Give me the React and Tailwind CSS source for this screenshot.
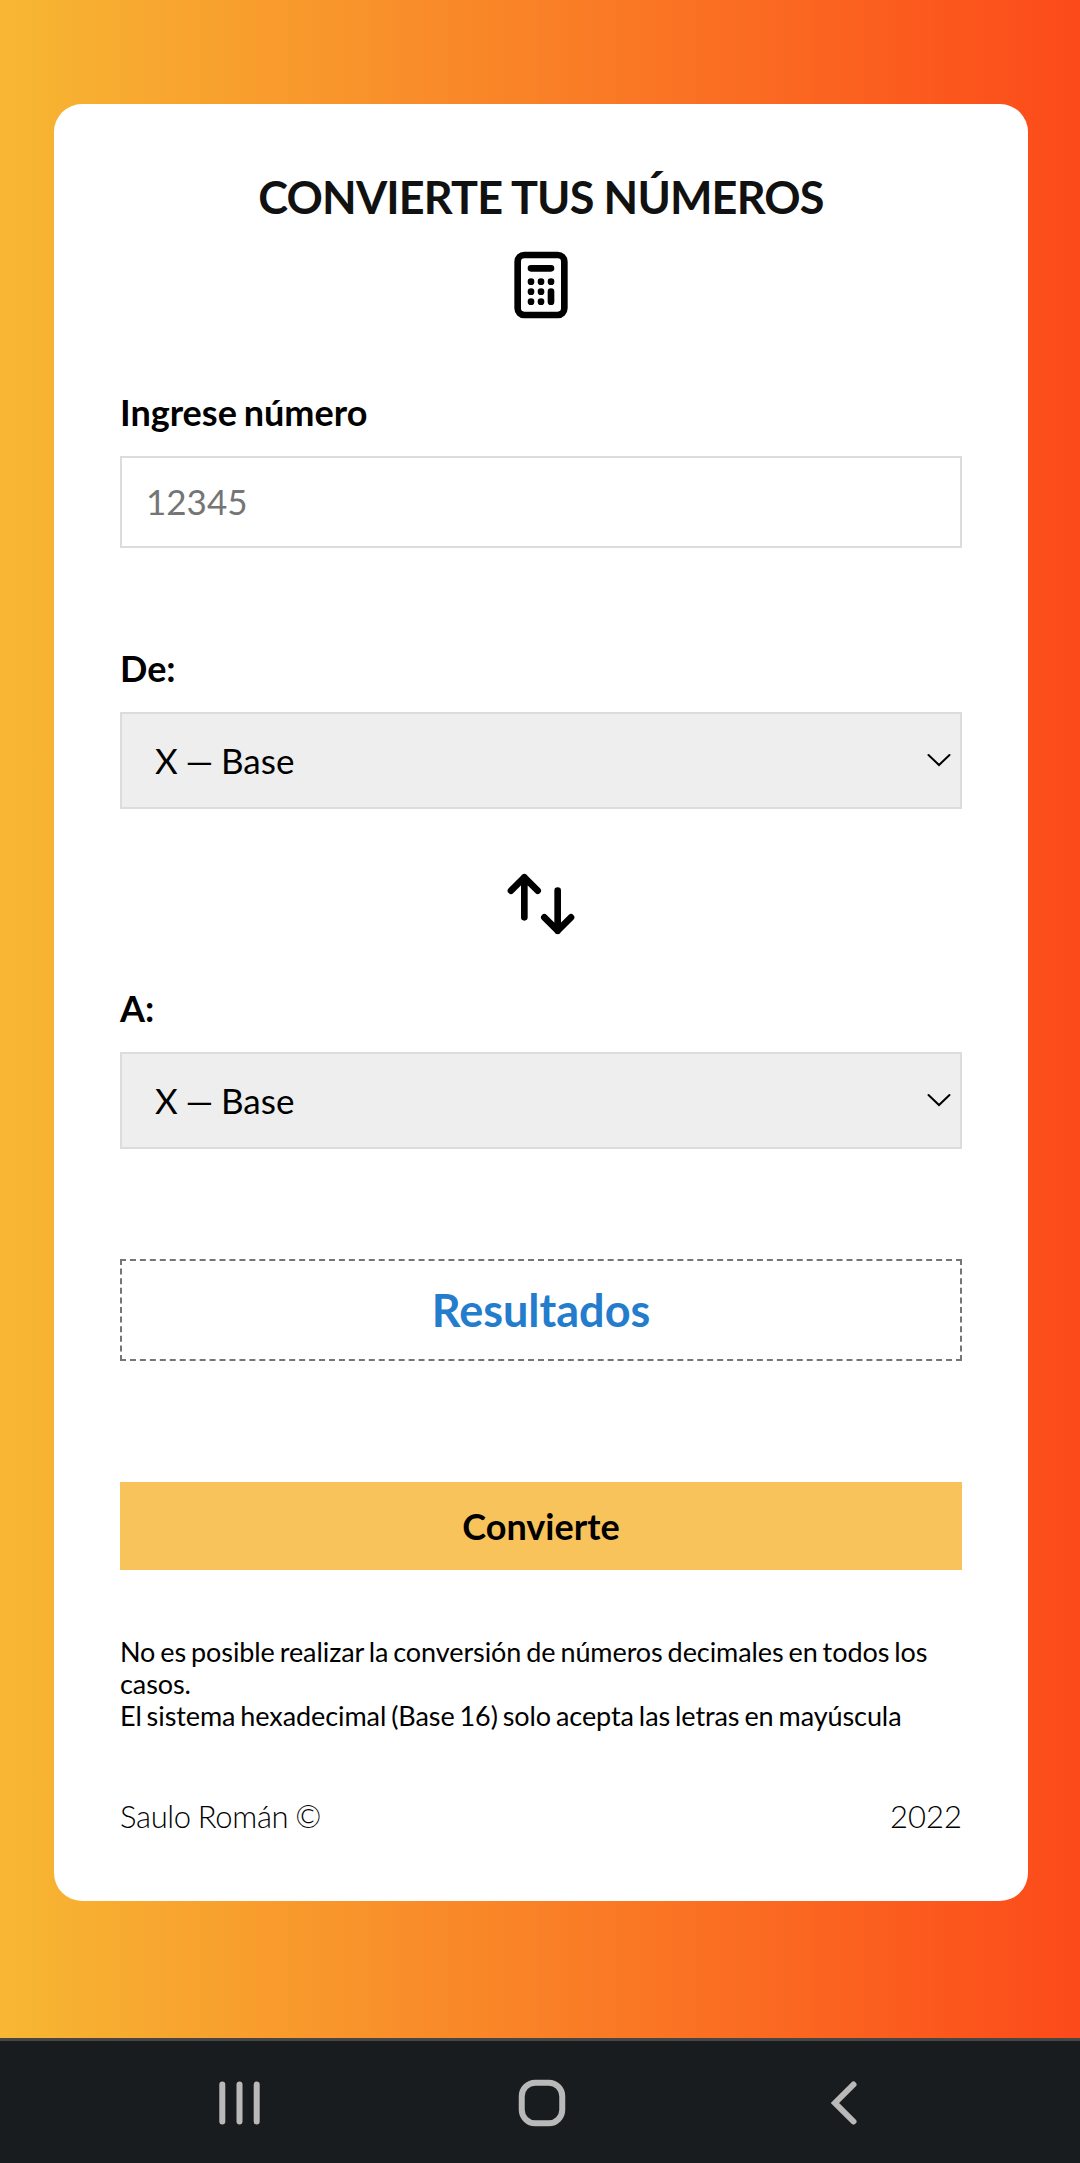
function Select({ label, id }) {
  return (
    <div className="flex flex-col">
      <label htmlFor={id} className="h-[42px] text-[36px] leading-[42px] font-bold">{label}</label>
      <button id={id} className="mt-[23px] flex h-[97px] items-center justify-between border-2 border-[#dcdcdc] bg-[#eeeeee] pr-[9px] pb-px pl-[33px] text-left text-[35px] leading-[42px]">
        <span className="[word-spacing:-1.2px]">X — Base</span>
        <svg className="h-[14px] w-6" viewBox="0 0 24 14" fill="none" stroke="#000" strokeWidth="2" strokeLinecap="round">
          <path d="M1.5 2 12 12 22.5 2" />
        </svg>
      </button>
    </div>
  );
}

function Icon({ d }) {
  return (
    <svg className="h-20 w-20" viewBox="0 0 24 24" fill="none" stroke="#000" strokeWidth="2" strokeLinecap="round" strokeLinejoin="round">
      <path d={d} />
    </svg>
  );
}

export default function App() {
  return (
    <div className="flex h-[2163px] w-[1080px] flex-col overflow-hidden bg-[#191c1e] font-['Lato',sans-serif] text-black">
      <main className="flex h-[2038px] flex-col bg-[linear-gradient(to_right,#f7b733,#fc4a1a)] pt-[104px] pl-[54px]">
        <section className="flex h-[1797px] w-[974px] flex-col rounded-[28px] bg-white px-[66px] pt-[66px]">
          <header className="flex flex-col items-center">
            <h1 className="h-[54px] text-[45px] leading-[54px] font-bold tracking-[-0.85px] whitespace-nowrap text-[#111111]">CONVIERTE TUS NÚMEROS</h1>
            <div className="mt-[21px]">
              <Icon d="M9 7h6m0 10v-3m-3 3h.01M9 17h.01M9 14h.01M12 14h.01M15 11h.01M12 11h.01M9 11h.01M7 21h10a2 2 0 002-2V5a2 2 0 00-2-2H7a2 2 0 00-2 2v14a2 2 0 002 2z" />
            </div>
          </header>
          <div className="mt-[66px] flex flex-col">
            <label htmlFor="numero" className="h-[42px] text-[36px] leading-[42px] font-bold [word-spacing:-1.9px]">Ingrese número</label>
            <input id="numero" placeholder="12345" className="mt-[23px] h-[92px] border-2 border-[#dcdcdc] px-6 pb-0.5 text-[35px] leading-[42px] placeholder:text-[#757575]" />
          </div>
          <div className="mt-[99px] flex flex-col">
            <Select id="de" label="De:" />
            <div className="mt-[54.5px] mb-[43.5px] flex justify-center">
              <Icon d="M7 16V4m0 0L3 8m4-4l4 4m6 0v12m0 0l4-4m-4 4l-4-4" />
            </div>
            <Select id="a" label="A:" />
          </div>
          <div className="mt-[110px] flex h-[102px] items-center justify-center border-2 border-dashed border-[#757575] text-[45px] leading-[54px] font-bold text-[#247ccc]">Resultados</div>
          <button className="mt-[121px] h-[88px] bg-[#f8c35a] text-[36px] leading-[42px] font-bold">Convierte</button>
          <p className="mt-[66px] text-[27px] leading-8 tracking-[-0.08px] [word-spacing:-1.9px]">
            No es posible realizar la conversión de números decimales en todos los casos.
            <br />
            El sistema hexadecimal (Base 16) solo acepta las letras en mayúscula
          </p>
          <footer className="mt-[65px] flex justify-between text-[31px] leading-[38px] font-light">
            <span className="tracking-[-0.35px] [word-spacing:-1px]">Saulo Román ©</span>
            <span>2022</span>
          </footer>
        </section>
      </main>
      <nav className="flex h-[125px] items-center border-t-[3px] border-[#484645] pt-0.5 pr-[220px] pl-[216px]">
        <svg className="h-12 w-12" viewBox="0 0 48 48" fill="none" stroke="#b9b9b9" strokeWidth="6" strokeLinecap="round">
          <path d="M6.300 5.500v37M23.500 5.500v37M40.700 5.500v37" />
        </svg>
        <svg className="ml-[254px] h-12 w-12" viewBox="0 0 48 48" fill="none" stroke="#b9b9b9" strokeWidth="6">
          <rect x="3.750" y="3.750" width="40.500" height="40.500" rx="13.500" />
        </svg>
        <svg className="ml-auto h-12 w-[34px]" viewBox="0 0 34 48" fill="none" stroke="#b9b9b9" strokeWidth="6" strokeLinecap="round">
          <path d="M27.500 5.500 9 24 27.500 42.500" />
        </svg>
      </nav>
    </div>
  );
}
